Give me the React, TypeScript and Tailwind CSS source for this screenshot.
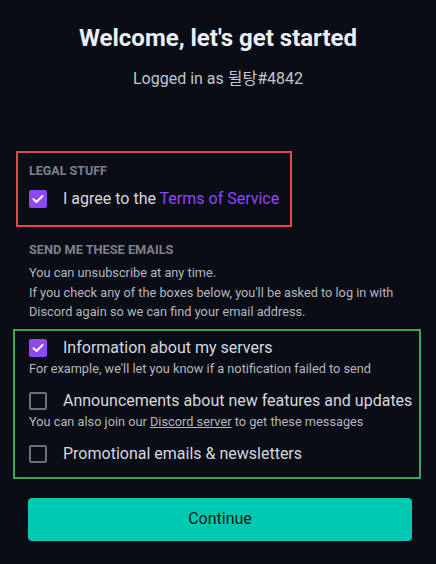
import React from "react";

function Check({ checked }: { checked: boolean }) {
  if (checked) {
    return (
      <div className="w-[18px] h-[18px] rounded-[2px] bg-[#8f47f6] flex items-center justify-center shrink-0">
        <svg width="12" height="10" viewBox="0 0 12 10" fill="none">
          <path d="M1.5 5.2 L4.5 8 L10.5 2" stroke="white" strokeWidth="2" strokeLinecap="round" strokeLinejoin="round" />
        </svg>
      </div>
    );
  }
  return <div className="w-[18px] h-[18px] rounded-[2px] border-2 border-[#6c6f77] shrink-0" />;
}

export default function App() {
  return (
    <div
      className="w-[436px] h-[564px] bg-[#0a0d15] flex flex-col overflow-hidden"
      style={{ fontFamily: "Roboto, 'Noto Sans CJK KR', sans-serif" }}
    >
      <h1 className="mt-[22px] text-center text-[24px] leading-[32px] font-bold text-[#eceef6]">
        Welcome, let's get started
      </h1>
      <p className="mt-[14px] text-center text-[16px] leading-[22px] text-[#c2c5cd]">
        Logged in as 뒬탕#4842
      </p>

      <div className="mt-[61px] ml-[16px] w-[276px] h-[76px] border-2 border-[#e5484d] pl-[11px] pt-[10px]">
        <div className="text-[12.5px] leading-[16px] font-bold text-[#7e818a] uppercase">Legal stuff</div>
        <div className="mt-[9.5px] flex items-center gap-[16px]">
          <Check checked />
          <span className="text-[16px] leading-[20px] text-[#d6d8de]">
            I agree to the <span className="text-[#9147ff]">Terms of Service</span>
          </span>
        </div>
      </div>

      <div className="ml-[29px] mt-[15px] text-[12.75px] leading-[16px] font-bold text-[#7e818a] uppercase">
        Send me these emails
      </div>
      <p className="ml-[29px] mt-[5.25px] mr-[12px] text-[12.75px] leading-[19.5px] text-[#b4b7bf]">
        You can unsubscribe at any time.
        <br />
        If you check any of the boxes below, you'll be asked to log in with Discord again so we can find your email address.
      </p>

      <div className="mt-[7px] ml-[13px] w-[408px] h-[150px] border-2 border-[#3fa35a] pl-[14px] pt-[7px] flex flex-col">
        <div className="flex items-center gap-[16px]">
          <Check checked />
          <span className="text-[16px] leading-[20px] text-[#d6d8de]">Information about my servers</span>
        </div>
        <div className="mt-[2.5px] text-[12.75px] leading-[18px] text-[#b4b7bf]">
          For example, we'll let you know if a notification failed to send
        </div>
        <div className="mt-[12.5px] flex items-center gap-[16px]">
          <Check checked={false} />
          <span className="text-[16px] leading-[20px] text-[#d6d8de]">Announcements about new features and updates</span>
        </div>
        <div className="mt-[2px] text-[12.75px] leading-[18px] text-[#b4b7bf]">
          You can also join our <span className="underline">Discord server</span> to get these messages
        </div>
        <div className="mt-[13px] flex items-center gap-[16px]">
          <Check checked={false} />
          <span className="text-[16px] leading-[20px] text-[#d6d8de]">Promotional emails &amp; newsletters</span>
        </div>
      </div>

      <button className="mt-[19px] ml-[28px] w-[384px] h-[43px] rounded-[4px] bg-[#00c9b1] text-[16px] text-[#0c1a1a]">
        Continue
      </button>
    </div>
  );
}
